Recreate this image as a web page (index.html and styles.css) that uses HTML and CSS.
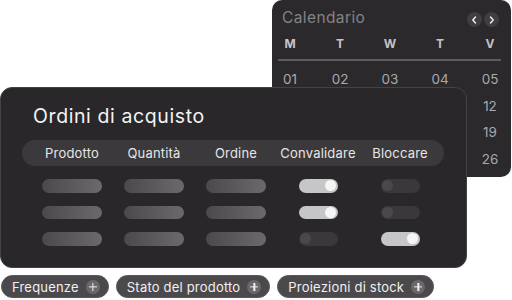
FILE: index.html
```html
<!DOCTYPE html>
<html lang="it">
<head>
<meta charset="utf-8">
<title>Ordini di acquisto</title>
<link rel="stylesheet" href="styles.css">
</head>
<body>
<div class="stage">
  <section class="calendar">
    <div class="cal-head">
      <span class="cal-title">Calendario</span>
      <div class="cal-nav">
        <button class="nav-btn" aria-label="Precedente"><svg width="7" height="8" viewBox="0 0 7 8"><path d="M4.5 1 L1.8 4 L4.5 7" fill="none" stroke="#f2f2f2" stroke-width="1.4" stroke-linecap="round" stroke-linejoin="round"/></svg></button>
        <button class="nav-btn" aria-label="Successivo"><svg width="7" height="8" viewBox="0 0 7 8"><path d="M2.5 1 L5.2 4 L2.5 7" fill="none" stroke="#f2f2f2" stroke-width="1.4" stroke-linecap="round" stroke-linejoin="round"/></svg></button>
      </div>
    </div>
    <div class="cal-grid cal-days">
      <span>M</span><span>T</span><span>W</span><span>T</span><span>V</span>
    </div>
    <div class="cal-divider"></div>
    <div class="cal-grid cal-nums">
      <span>01</span><span>02</span><span>03</span><span>04</span><span>05</span>
      <span></span><span></span><span></span><span></span><span>12</span>
      <span></span><span></span><span></span><span></span><span>19</span>
      <span></span><span></span><span></span><span></span><span>26</span>
    </div>
  </section>

  <section class="orders">
    <h1 class="orders-title">Ordini di acquisto</h1>
    <div class="cols head">
      <span>Prodotto</span><span>Quantità</span><span>Ordine</span><span>Convalidare</span><span>Bloccare</span>
    </div>
    <div class="cols rows">
      <span class="bar"></span><span class="bar"></span><span class="bar"></span><span class="toggle on"></span><span class="toggle"></span>
      <span class="bar"></span><span class="bar"></span><span class="bar"></span><span class="toggle on"></span><span class="toggle"></span>
      <span class="bar"></span><span class="bar"></span><span class="bar"></span><span class="toggle"></span><span class="toggle on"></span>
    </div>
  </section>

  <div class="chips">
    <span class="chip">Frequenze<i class="plus"></i></span>
    <span class="chip">Stato del prodotto<i class="plus"></i></span>
    <span class="chip">Proiezioni di stock<i class="plus"></i></span>
  </div>
</div>
</body>
</html>
```

FILE: styles.css
```css
* { box-sizing: border-box; }
html, body { margin: 0; background: #ffffff; }
body {
  font-family: Inter, "Noto Sans", sans-serif;
  width: 512px;
  height: 300px;
  overflow: hidden;
}
.stage {
  position: relative;
  width: 512px;
  height: 300px;
  padding-top: 87px;
}

/* Calendar window */
.calendar {
  position: absolute;
  left: 272px;
  top: 0;
  width: 239px;
  height: 177px;
  background: #2b292c;
  border-radius: 10px;
  z-index: 0;
}
.cal-head {
  display: flex;
  align-items: center;
  justify-content: space-between;
  padding: 8px 12px 0 10px;
  height: 28px;
}
.cal-title {
  font-size: 15.5px;
  line-height: 20px;
  color: #858386;
  letter-spacing: 0.4px;
}
.cal-nav { display: flex; gap: 2px; margin-top: 3px; }
.nav-btn {
  width: 15px;
  height: 15px;
  border: 0;
  padding: 0;
  border-radius: 50%;
  background: #403e41;
  display: flex;
  align-items: center;
  justify-content: center;
}
.cal-grid {
  display: grid;
  grid-template-columns: repeat(5, 20px);
  column-gap: 30px;
  margin-left: 8px;
  justify-items: center;
}
.cal-days {
  margin-top: 8px;
  font-size: 12px;
  line-height: 16px;
  font-weight: 700;
  color: #c5c3c6;
}
.cal-divider {
  height: 2px;
  background: #5e5c5f;
  margin: 7px 10px 0 6px;
}
.cal-nums {
  margin-top: 5px;
  font-size: 13.5px;
  line-height: 26.5px;
  color: #aaa8ab;
}

/* Orders window */
.orders {
  position: relative;
  z-index: 1;
  width: 467px;
  height: 181px;
  background: #29272a;
  border: 1px solid #444245;
  border-radius: 12px;
  padding: 16px 22px 0 21px;
}
.orders-title {
  margin: 0 0 12px 11px;
  font-size: 19.5px;
  line-height: 24px;
  font-weight: 400;
  letter-spacing: 0.6px;
  color: #f3f3f3;
}
.cols {
  display: grid;
  grid-template-columns: repeat(5, 82px);
  justify-items: center;
  align-items: center;
}
.head {
  height: 26px;
  border-radius: 13px;
  background: #3b393c;
  padding-left: 9px;
  font-size: 13px;
  letter-spacing: 0.2px;
  color: #e6e6e6;
}
.rows {
  padding-left: 9px;
  margin-top: 13px;
  row-gap: 13px;
  grid-auto-rows: 13.5px;
}
.bar {
  width: 60px;
  height: 13.5px;
  border-radius: 7px;
  background: linear-gradient(90deg, #4b494c, #6b696c);
}
.toggle {
  position: relative;
  width: 39px;
  height: 13.5px;
  border-radius: 7px;
  background: #3a383b;
}
.toggle::after {
  content: "";
  position: absolute;
  top: 1.25px;
  left: 1.5px;
  width: 11px;
  height: 11px;
  border-radius: 50%;
  background: #4a484b;
}
.toggle.on { background: #c6c5c7; }
.toggle.on::after { left: auto; right: 1.5px; background: #f5f5f5; }

/* Chips */
.chips {
  display: flex;
  gap: 7px;
  margin-top: 7px;
  padding-left: 1px;
}
.chip {
  display: inline-flex;
  align-items: center;
  gap: 7px;
  height: 23px;
  padding: 0 8px 0 10px;
  border-radius: 12px;
  background: #4b494c;
  border: 1px solid #58565a;
  color: #f1f1f1;
  font-size: 13px;
  letter-spacing: 0.2px;
}
.plus {
  position: relative;
  width: 14px;
  height: 14px;
  border-radius: 50%;
  background: #6a686b;
}
.plus::before, .plus::after {
  content: "";
  position: absolute;
  left: 50%;
  top: 50%;
  background: #f1f1f1;
  transform: translate(-50%, -50%);
}
.plus::before { width: 8px; height: 1.3px; }
.plus::after { width: 1.3px; height: 8px; }
```
